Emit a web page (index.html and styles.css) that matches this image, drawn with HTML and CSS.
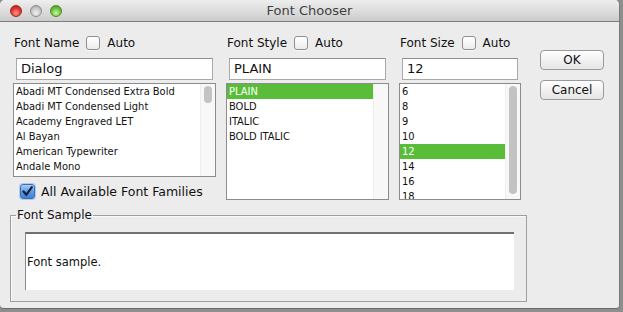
FILE: index.html
```html
<!DOCTYPE html>
<html>
<head>
<meta charset="utf-8">
<link rel="stylesheet" href="styles.css">
</head>
<body>
<div class="window">
  <div class="titlebar">
    <div class="lights">
      <span class="light red"></span>
      <span class="light grey"></span>
      <span class="light green"></span>
    </div>
    <div class="title">Font Chooser</div>
  </div>
  <div class="content">
    <div class="main">
      <div class="col col-name">
        <div class="label-row"><span class="label">Font Name</span><span class="cb"></span><span class="label">Auto</span></div>
        <div class="field">Dialog</div>
        <div class="list list-name">
          <div class="items">
            <div class="item">Abadi MT Condensed Extra Bold</div>
            <div class="item">Abadi MT Condensed Light</div>
            <div class="item">Academy Engraved LET</div>
            <div class="item">Al Bayan</div>
            <div class="item">American Typewriter</div>
            <div class="item">Andale Mono</div>
          </div>
          <div class="track"><div class="thumb thumb-small"></div></div>
        </div>
        <div class="check-row">
          <span class="cb checked"><svg width="11" height="11" viewBox="0 0 11 11"><path d="M1.5 5.5 L4.3 8.8 L9.8 1.2" fill="none" stroke="#14213d" stroke-width="2.2" stroke-linecap="round" stroke-linejoin="round"/></svg></span>
          <span class="check-label">All Available Font Families</span>
        </div>
      </div>
      <div class="col col-style">
        <div class="label-row"><span class="label">Font Style</span><span class="cb"></span><span class="label">Auto</span></div>
        <div class="field">PLAIN</div>
        <div class="list list-tall">
          <div class="items">
            <div class="item sel">PLAIN</div>
            <div class="item">BOLD</div>
            <div class="item">ITALIC</div>
            <div class="item">BOLD ITALIC</div>
          </div>
          <div class="track"></div>
        </div>
      </div>
      <div class="col col-size">
        <div class="label-row"><span class="label">Font Size</span><span class="cb"></span><span class="label">Auto</span></div>
        <div class="field">12</div>
        <div class="list list-tall">
          <div class="items">
            <div class="item">6</div>
            <div class="item">8</div>
            <div class="item">9</div>
            <div class="item">10</div>
            <div class="item sel">12</div>
            <div class="item">14</div>
            <div class="item">16</div>
            <div class="item">18</div>
          </div>
          <div class="track"><div class="thumb thumb-long"></div></div>
        </div>
      </div>
      <div class="buttons">
        <div class="btn">OK</div>
        <div class="btn">Cancel</div>
      </div>
    </div>
    <fieldset class="sample-group">
      <legend>Font Sample</legend>
      <div class="sample">Font sample.</div>
    </fieldset>
  </div>
</div>
</body>
</html>
```
FILE: styles.css
```css
html, body {
  margin: 0;
  padding: 0;
}
body {
  width: 623px;
  height: 312px;
  background: #8e8e8e;
  overflow: hidden;
  font-family: "DejaVu Sans", sans-serif;
  color: #111;
}
.window {
  width: 619px;
  height: 308px;
  background: #ececec;
  border-right: 1px solid #7a7a7a;
  border-bottom: 1px solid #6a6a6a;
  border-radius: 5px 5px 4px 4px;
  overflow: hidden;
}
.titlebar {
  height: 21px;
  border-bottom: 1px solid #7d7d7d;
  background: linear-gradient(#eeeeee, #dadada 60%, #cbcbcb);
  display: flex;
  align-items: center;
}
.lights {
  display: flex;
  gap: 8px;
  padding-left: 10px;
  align-items: center;
}
.light {
  width: 12px;
  height: 12px;
  border-radius: 50%;
  box-sizing: border-box;
}
.light.red {
  background: radial-gradient(circle at 50% 70%, #ff9a8a, #e0332c 55%, #a81a14);
  border: 1px solid #9b2a25;
}
.light.grey {
  background: radial-gradient(circle at 50% 70%, #f2f2f2, #c7c7c7 55%, #9a9a9a);
  border: 1px solid #8c8c8c;
}
.light.green {
  background: radial-gradient(circle at 50% 70%, #cef5a4, #6cc03f 55%, #3e8a1d);
  border: 1px solid #4a8a2c;
}
.title {
  flex: 1;
  text-align: center;
  font-size: 13px;
  color: #3f3f3f;
  margin-right: 56px;
  margin-left: -6px;
}
.content {
  padding-top: 13px;
}
.main {
  display: flex;
  align-items: flex-start;
  padding-left: 13px;
}
.col {
  display: flex;
  flex-direction: column;
}
.col-name { width: 203px; }
.col-style { width: 163px; margin-left: 10px; }
.col-size { width: 122px; margin-left: 10px; }
.label-row {
  height: 16px;
  display: flex;
  align-items: center;
  padding-left: 1px;
  gap: 7px;
}
.label {
  font-size: 12px;
  color: #111;
}
.cb {
  width: 14px;
  height: 14px;
  box-sizing: border-box;
  border: 1px solid #8f8f8f;
  border-radius: 3px;
  background: linear-gradient(#ffffff, #ececec);
  box-shadow: 0 1px 0 rgba(255,255,255,0.6);
}
.field {
  margin: 7px 3px 0 3px;
  height: 22px;
  box-sizing: border-box;
  background: #fff;
  border: 1px solid #a9a9a9;
  border-top-color: #8e8e8e;
  font-size: 13px;
  line-height: 20px;
  padding-left: 4px;
}
.list {
  margin-top: 3px;
  box-sizing: border-box;
  border: 1px solid #8c8c8c;
  background: #fff;
  display: flex;
  overflow: hidden;
}
.list-name { height: 94px; }
.list-tall { height: 117px; }
.items {
  flex: 1;
  overflow: hidden;
}
.item {
  height: 15px;
  line-height: 15px;
  font-size: 11px;
  font-family: "DejaVu Sans Condensed", "DejaVu Sans", sans-serif;
  padding-left: 2px;
  white-space: nowrap;
}
.item.sel {
  background: #59bd3a;
  color: #fff;
}
.track {
  width: 15px;
  background: #f8f8f8;
  border-left: 1px solid #eeeeee;
  display: flex;
  justify-content: center;
  padding-top: 2px;
  box-sizing: border-box;
}
.thumb {
  width: 8px;
  background: #c3c3c3;
  border-radius: 4px;
}
.thumb-small { height: 17px; }
.thumb-long { height: 108px; }
.check-row {
  margin-top: 5px;
  display: flex;
  align-items: center;
  padding-left: 7px;
  height: 18px;
}
.cb.checked {
  width: 15px;
  height: 15px;
  border: 1px solid #3f6fb0;
  background: linear-gradient(#a9cdf5, #5f9be3 50%, #3d7fd6);
  box-shadow: 0 0 0 1px rgba(110,160,230,0.45);
  display: flex;
  align-items: center;
  justify-content: center;
}
.check-label {
  margin-left: 6px;
  font-size: 12.5px;
}
.buttons {
  margin-left: 19px;
  margin-top: 15px;
  display: flex;
  flex-direction: column;
  gap: 10px;
}
.btn {
  width: 64px;
  height: 20px;
  box-sizing: border-box;
  border: 1px solid #9a9a9a;
  border-radius: 4px;
  background: linear-gradient(#ffffff, #f1f1f1 50%, #e6e6e6);
  font-size: 12px;
  line-height: 18px;
  text-align: center;
  color: #111;
}
.sample-group {
  margin: 7px 0 0 10px;
  width: 517px;
  box-sizing: border-box;
  padding: 0;
  border: 1px solid #9e9e9e;
  box-shadow: inset 1px 1px 0 #fafafa;
  min-width: 0;
}
.sample-group legend {
  font-size: 12px;
  line-height: 16px;
  padding: 0 1px;
  margin-left: 5px;
  color: #111;
}
.sample {
  margin: 9px 12px 11px 14px;
  height: 58px;
  box-sizing: border-box;
  background: #fff;
  border-top: 2px solid #707070;
  border-left: 1px solid #8a8a8a;
  display: flex;
  align-items: center;
  font-size: 11.5px;
  padding-left: 1px;
}
```
